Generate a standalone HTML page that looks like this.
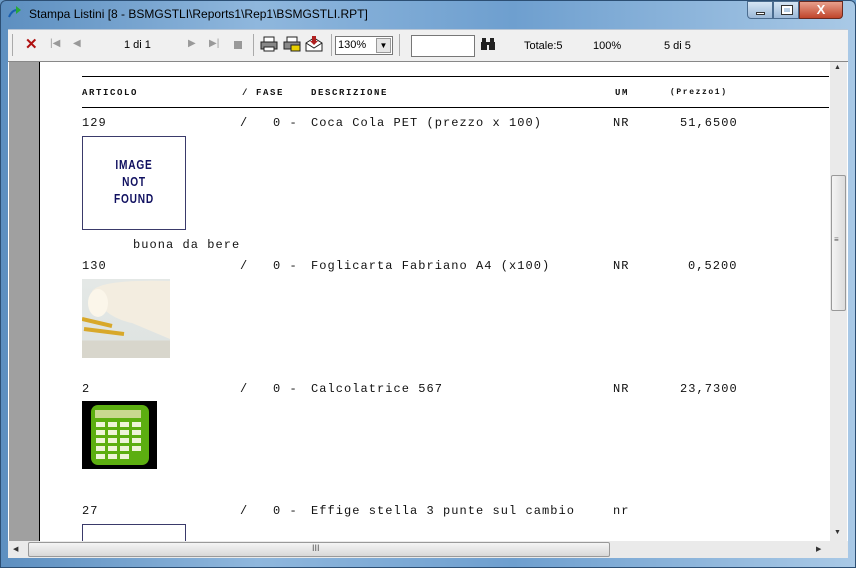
<!DOCTYPE html>
<html><head><style>
*{margin:0;padding:0;box-sizing:border-box}
body{width:856px;height:568px;overflow:hidden;background:#6c9cc8;font-family:"Liberation Sans",sans-serif;position:relative}
.a{position:absolute}
.m{position:absolute;font-family:"Liberation Mono",monospace;font-size:12px;letter-spacing:1.05px;color:#111;white-space:pre}
.h{position:absolute;font-family:"Liberation Mono",monospace;font-size:9px;font-weight:bold;letter-spacing:1.6px;color:#111;white-space:pre}
.t{position:absolute;font-size:11px;color:#000}
</style></head><body>
<div class="a" style="left:0;top:0;width:856px;height:568px;background:linear-gradient(90deg,#5d8fc0 0%,#8fb7dd 30%,#6e9fcf 60%,#a9c9e6 100%);border:1px solid #2c4f74;border-radius:6px 6px 0 0"></div>
<div class="a" style="left:8px;top:5px;width:14px;height:14px"><svg width="14" height="14"><path d="M1 12 Q4 5 9 5" stroke="#1a5fb0" stroke-width="2" fill="none"/><path d="M8 1 L13 5 L8 9 Z" fill="#28a838"/></svg></div>
<div class="t" style="left:29px;top:7px;font-size:12px">Stampa Listini [8 - BSMGSTLI\Reports1\Rep1\BSMGSTLI.RPT]</div>
<div class="a" style="left:747px;top:1px;width:26px;height:18px;border:1px solid #4b6c8f;border-radius:0 0 0 4px;background:linear-gradient(#d6e5f4,#9cb9d8)"><div class="a" style="left:8px;top:10px;width:9px;height:3px;background:#fff;border:1px solid #333"></div></div>
<div class="a" style="left:773px;top:1px;width:26px;height:18px;border:1px solid #4b6c8f;background:linear-gradient(#d6e5f4,#9cb9d8)"><div class="a" style="left:8px;top:4px;width:10px;height:8px;border:2px solid #fff;outline:1px solid #333"></div></div>
<div class="a" style="left:799px;top:1px;width:44px;height:18px;border:1px solid #6b2a20;border-radius:0 0 4px 0;background:linear-gradient(#e8a08c,#c0452b);color:#fff;font-weight:bold;font-size:13px;text-align:center;line-height:16px">X</div>
<div class="a" style="left:8px;top:29px;width:840px;height:32px;background:#f0f0f0;border-top:1px solid #b8c6d6"></div>
<div class="a" style="left:12px;top:34px;width:1px;height:22px;background:#aaa"></div>
<div class="t" style="left:25px;top:35px;color:#b01010;font-weight:bold;font-size:15px">✕</div>
<div class="t" style="left:50px;top:38px;color:#999;font-size:10px">|◀</div>
<div class="t" style="left:73px;top:38px;color:#999;font-size:10px">◀</div>
<div class="t" style="left:124px;top:39px">1 di 1</div>
<div class="t" style="left:188px;top:38px;color:#999;font-size:10px">▶</div>
<div class="t" style="left:209px;top:38px;color:#999;font-size:10px">▶|</div>
<div class="a" style="left:234px;top:41px;width:8px;height:8px;background:#999"></div>
<div class="a" style="left:253px;top:34px;width:1px;height:22px;background:#aaa"></div>
<svg class="a" style="left:260px;top:36px" width="18" height="16"><rect x="4" y="1" width="10" height="5" fill="#fff" stroke="#222"/><rect x="1" y="6" width="16" height="7" fill="#888" stroke="#222"/><rect x="4" y="11" width="10" height="4" fill="#fff" stroke="#222"/></svg>
<svg class="a" style="left:283px;top:36px" width="18" height="16"><rect x="4" y="1" width="10" height="5" fill="#fff" stroke="#222"/><rect x="1" y="6" width="16" height="7" fill="#888" stroke="#222"/><rect x="8" y="9" width="9" height="6" fill="#e8d000" stroke="#222"/></svg>
<svg class="a" style="left:305px;top:35px" width="18" height="17"><path d="M1 8 L9 3 L17 8 L17 16 L1 16Z" fill="#fff" stroke="#222"/><path d="M1 8 L9 13 L17 8" fill="none" stroke="#222"/><path d="M7 1 L11 1 L11 6 L13 6 L9 10 L5 6 L7 6Z" fill="#b02020"/></svg>
<div class="a" style="left:331px;top:34px;width:1px;height:22px;background:#aaa"></div>
<div class="a" style="left:335px;top:36px;width:58px;height:19px;border:1px solid #777;background:#fff;font-size:11px;padding:2px 0 0 2px">130%</div>
<div class="a" style="left:376px;top:38px;width:15px;height:15px;background:#e6e6e6;border:1px solid #999;font-size:8px;text-align:center;line-height:14px">▼</div>
<div class="a" style="left:399px;top:34px;width:1px;height:22px;background:#aaa"></div>
<div class="a" style="left:411px;top:35px;width:64px;height:22px;border:1px solid #777;background:#fff"></div>
<svg class="a" style="left:480px;top:38px" width="16" height="13"><rect x="1" y="4" width="6" height="8" fill="#222"/><rect x="9" y="4" width="6" height="8" fill="#222"/><rect x="2" y="0" width="4" height="5" fill="#222"/><rect x="10" y="0" width="4" height="5" fill="#222"/><rect x="6" y="4" width="4" height="3" fill="#222"/></svg>
<div class="t" style="left:524px;top:40px">Totale:5</div>
<div class="t" style="left:593px;top:40px">100%</div>
<div class="t" style="left:664px;top:40px">5 di 5</div>
<div class="a" style="left:8px;top:61px;width:840px;height:480px;background:#fff;border-top:1px solid #888"></div>
<div class="a" style="left:9px;top:62px;width:31px;height:479px;background:#a0a0a0;border-right:1px solid #000"></div>
<div class="a" style="left:830px;top:62px;width:17px;height:479px;background:#eaeaea"></div>
<div class="a" style="left:831px;top:175px;width:15px;height:136px;background:linear-gradient(90deg,#f4f4f4,#dcdcdc);border:1px solid #999;border-radius:2px"></div>
<div class="t" style="left:834px;top:235px;font-size:8px;color:#555">≡</div>
<div class="t" style="left:834px;top:64px;font-size:7px;color:#333">▲</div>
<div class="t" style="left:834px;top:529px;font-size:7px;color:#333">▼</div>
<div class="a" style="left:8px;top:541px;width:840px;height:17px;background:#eaeaea"></div>
<div class="a" style="left:28px;top:542px;width:582px;height:15px;background:linear-gradient(#f4f4f4,#d8d8d8);border:1px solid #999;border-radius:2px"></div>
<div class="t" style="left:312px;top:543px;font-size:9px;color:#555">III</div>
<div class="t" style="left:13px;top:545px;font-size:7px;color:#333">◀</div>
<div class="t" style="left:816px;top:545px;font-size:7px;color:#333">▶</div>

<div class="a" style="left:82px;top:76px;width:747px;height:1px;background:#000"></div>
<div class="a" style="left:82px;top:107px;width:747px;height:1px;background:#000"></div>
<div class="h" style="left:82px;top:88px">ARTICOLO</div>
<div class="h" style="left:242px;top:88px">/ FASE</div>
<div class="h" style="left:311px;top:88px">DESCRIZIONE</div>
<div class="h" style="left:615px;top:88px">UM</div>
<div class="h" style="left:670px;top:88px;font-size:8px">(Prezzo1)</div>

<div class="m" style="left:82px;top:116px">129</div>
<div class="m" style="left:240px;top:116px">/   0 -</div>
<div class="m" style="left:311px;top:116px">Coca Cola PET (prezzo x 100)</div>
<div class="m" style="left:613px;top:116px">NR</div>
<div class="m" style="left:680px;top:116px">51,6500</div>
<div class="a" style="left:82px;top:136px;width:104px;height:94px;border:1px solid #3a3a6a"></div>
<div class="a" style="left:82px;top:156px;width:104px;text-align:center;color:#101060;font-weight:bold;font-size:13px;line-height:17px;letter-spacing:1px;transform:scaleX(0.78);transform-origin:52px 0">IMAGE<br>NOT<br>FOUND</div>
<div class="m" style="left:133px;top:238px">buona da bere</div>

<div class="m" style="left:82px;top:259px">130</div>
<div class="m" style="left:240px;top:259px">/   0 -</div>
<div class="m" style="left:311px;top:259px">Foglicarta Fabriano A4 (x100)</div>
<div class="m" style="left:613px;top:259px">NR</div>
<div class="m" style="left:688px;top:259px">0,5200</div>
<div class="a" style="left:82px;top:279px;width:88px;height:79px;background:linear-gradient(#e4e8e6 0%,#dfe4e2 78%,#d8d6cc 78%)"><svg width="88" height="79"><path d="M10 12 Q20 0 88 2 L88 60 L50 44 Q20 38 10 12Z" fill="#f3ede0"/><ellipse cx="16" cy="24" rx="10" ry="14" fill="#fbf6ea"/><path d="M0 40 L30 47" stroke="#d8a82a" stroke-width="4"/><path d="M2 50 L42 55" stroke="#d8a82a" stroke-width="4"/></svg></div>

<div class="m" style="left:82px;top:382px">2</div>
<div class="m" style="left:240px;top:382px">/   0 -</div>
<div class="m" style="left:311px;top:382px">Calcolatrice 567</div>
<div class="m" style="left:613px;top:382px">NR</div>
<div class="m" style="left:680px;top:382px">23,7300</div>
<div class="a" style="left:82px;top:401px;width:75px;height:68px;background:#000"><svg width="75" height="68"><rect x="9" y="4" width="58" height="60" rx="7" fill="#5cae10"/><rect x="13" y="9" width="46" height="8" fill="#c8d890"/><g fill="#eef4d8"><rect x="14" y="21" width="9" height="5"/><rect x="26" y="21" width="9" height="5"/><rect x="38" y="21" width="9" height="5"/><rect x="50" y="21" width="9" height="5"/><rect x="14" y="29" width="9" height="5"/><rect x="26" y="29" width="9" height="5"/><rect x="38" y="29" width="9" height="5"/><rect x="50" y="29" width="9" height="5"/><rect x="14" y="37" width="9" height="5"/><rect x="26" y="37" width="9" height="5"/><rect x="38" y="37" width="9" height="5"/><rect x="50" y="37" width="9" height="5"/><rect x="14" y="45" width="9" height="5"/><rect x="26" y="45" width="9" height="5"/><rect x="38" y="45" width="9" height="5"/><rect x="50" y="45" width="9" height="5"/><rect x="14" y="53" width="9" height="5"/><rect x="26" y="53" width="9" height="5"/><rect x="38" y="53" width="9" height="5"/></g></svg></div>

<div class="m" style="left:82px;top:504px">27</div>
<div class="m" style="left:240px;top:504px">/   0 -</div>
<div class="m" style="left:311px;top:504px">Effige stella 3 punte sul cambio</div>
<div class="m" style="left:613px;top:504px">nr</div>
<div class="a" style="left:82px;top:524px;width:104px;height:17px;border:1px solid #3a3a6a;border-bottom:none"></div>
</body></html>
